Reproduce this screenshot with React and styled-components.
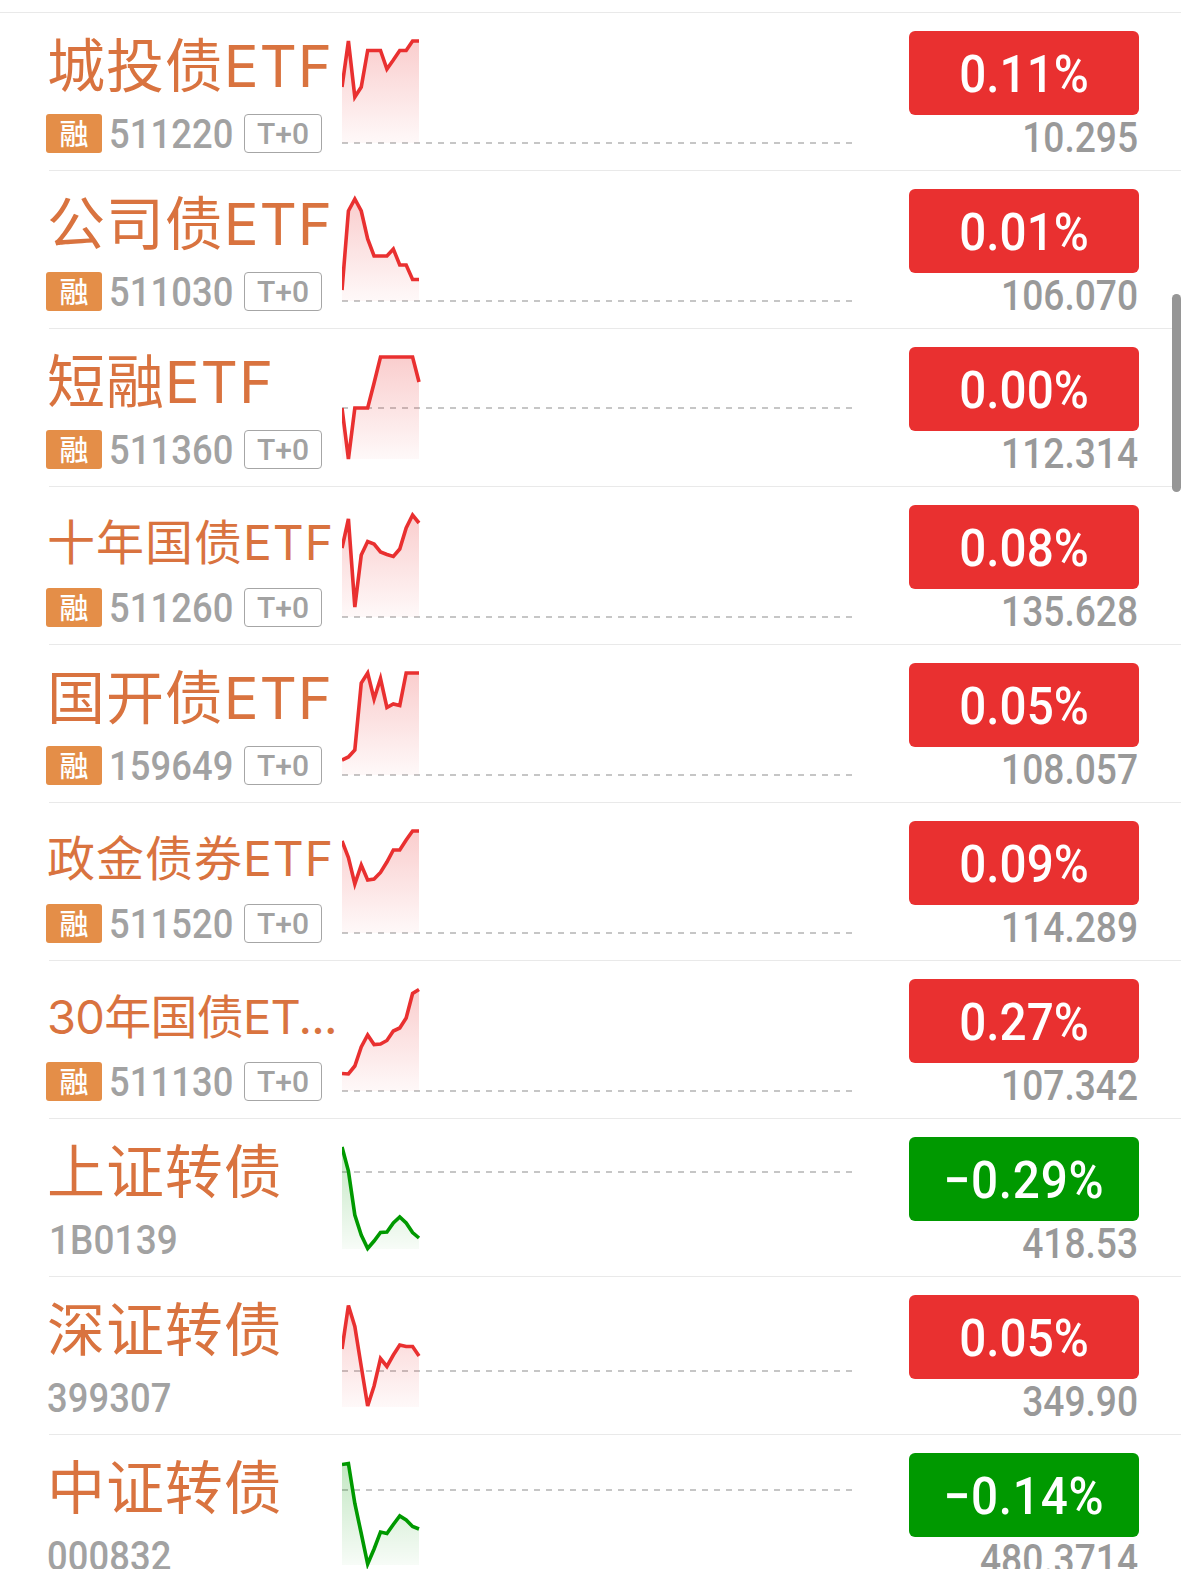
import React from "react";
import styled, { createGlobalStyle } from "styled-components";

const GlobalStyle = createGlobalStyle`
  * { box-sizing: border-box; }
  html, body { margin: 0; padding: 0; background: #fff; overflow: hidden; }
`;

const RED = "#e93030";
const GREEN = "#009900";
const DIGITS = `Roboto, "Liberation Sans", sans-serif`;
const HAN = `"Noto Sans CJK SC", sans-serif`;

const Screen = styled.main`
  position: relative;
  width: 1181px;
  height: 1569px;
  padding-top: 12px;
  overflow: hidden;
  background: #fff;
`;

const Divider = styled.div`
  height: 1px;
  margin-left: ${(p) => (p.$full ? 0 : 49)}px;
  background: #e9e9e9;
`;

const Row = styled.article`
  display: flex;
  height: 157px;
  padding: 0 42px 0 46px;
`;

const Identity = styled.div`
  width: 296px;
  flex: none;
  display: flex;
  flex-direction: column;
`;

const Name = styled.div`
  height: 101px;
  padding-left: 1px;
  padding-top: ${(p) => (p.$size < 58 ? 6 : 3)}px;
  font-family: Inter, ${HAN};
  font-size: ${(p) => p.$size}px;
  letter-spacing: ${(p) => p.$spacing}px;
  line-height: 100px;
  color: #d9733f;
  white-space: nowrap;
`;

const Meta = styled.div`
  display: flex;
  align-items: center;
  height: 39px;
`;

const MarginTag = styled.span`
  width: 56px;
  height: 39px;
  margin-right: 7px;
  flex: none;
  border-radius: 3px;
  background: #e48e48;
  color: #fff;
  font: 500 29px/37px ${HAN};
  text-align: center;
`;

const Code = styled.span`
  width: 135px;
  margin-left: ${(p) => p.$indent || 0}px;
  flex: none;
  font: 500 41.5px/39px ${DIGITS};
  letter-spacing: 0.1px;
  color: #a2a2a2;
  transform: scaleX(${(p) => p.$stretch || 0.875});
  transform-origin: left center;
`;

const Settlement = styled.span`
  display: flex;
  justify-content: center;
  width: 78px;
  height: 39px;
  flex: none;
  border: 1px solid #a6a6a6;
  border-radius: 4px;
  font: 500 30px/37px ${DIGITS};
  color: #a2a2a2;
`;

const Chart = styled.svg`
  display: block;
  width: 510px;
  height: 157px;
  flex: none;
`;

const Quote = styled.div`
  width: 230px;
  margin-left: auto;
  padding-top: 18px;
  flex: none;
`;

const Change = styled.div`
  display: flex;
  justify-content: center;
  height: 84px;
  border-radius: 6px;
  background: ${(p) => (p.$down ? GREEN : RED)};
  color: #fff;
  font: 500 51.5px/88px ${DIGITS};
`;

const ChangeText = styled.span`
  letter-spacing: ${(p) => (p.$down ? 0.8 : 0)}px;
  transform: scaleX(0.925);
`;

const Price = styled.div`
  height: 44px;
  padding-right: 1px;
  font: 500 42px/45px ${DIGITS};
  color: #999;
  text-align: right;
  transform: scaleX(0.885);
  transform-origin: right center;
`;

const ScrollThumb = styled.div`
  position: absolute;
  top: 294px;
  right: 0;
  width: 9px;
  height: 198px;
  border-radius: 5px;
  background: #969696;
`;

const funds = [
  { name: "城投债ETF", code: "511220", etf: true, change: "0.11%", price: "10.295", base: 130,
    points: [74, 28, 84, 74, 37.5, 37.5, 37.5, 56, 47, 37.5, 37.5, 28, 28] },
  { name: "公司债ETF", code: "511030", etf: true, change: "0.01%", price: "106.070", base: 130,
    points: [119, 40, 28, 40, 68, 85, 85, 85, 78, 94, 94, 108.5, 108.5] },
  { name: "短融ETF", code: "511360", etf: true, change: "0.00%", price: "112.314", base: 79,
    points: [79, 130, 79, 79, 79, 54, 28, 28, 28, 28, 28, 28, 53] },
  { name: "十年国债ETF", size: 48, spacing: 1, code: "511260", etf: true, change: "0.08%", price: "135.628", base: 130,
    points: [61, 32, 120, 68, 54.5, 57, 65, 67.5, 69.5, 62, 41, 28, 36] },
  { name: "国开债ETF", code: "159649", etf: true, change: "0.05%", price: "108.057", base: 130,
    points: [115, 112, 105, 38, 28, 54, 33.5, 62.5, 59, 60.5, 28, 28, 28] },
  { name: "政金债券ETF", size: 48, spacing: 1, code: "511520", etf: true, change: "0.09%", price: "114.289", base: 130,
    points: [38, 54.5, 81, 62, 77, 76, 69.5, 59, 47, 47, 37, 28, 28] },
  { name: "30年国债ET...", size: 47, spacing: -0.75, code: "511130", etf: true, change: "0.27%", price: "107.342", base: 130,
    points: [112.5, 113, 105, 86, 74, 83.5, 83, 79.5, 70, 67, 57, 32.5, 28.5] },
  { name: "上证转债", code: "1B0139", indent: 3, stretch: 0.89, down: true, change: "−0.29%", price: "418.53", base: 53,
    points: [28, 52, 96, 116, 129.5, 122, 113.5, 113, 104, 98, 104, 113.5, 119] },
  { name: "深证转债", code: "399307", indent: 1, change: "0.05%", price: "349.90", base: 94,
    points: [72, 28.5, 49.5, 89.5, 129, 109, 81.5, 89.5, 78, 68, 69.5, 69.5, 79] },
  { name: "中证转债", code: "000832", indent: 1, down: true, change: "−0.14%", price: "480.3714", base: 55,
    points: [29.5, 28.5, 68.5, 98.5, 129, 114, 97, 98.5, 89.5, 81, 85, 91.5, 94] },
];

function Sparkline({ id, points, base, down }) {
  const color = down ? GREEN : RED;
  const step = 77 / (points.length - 1);
  const line = points.map((y, i) => `${(i * step).toFixed(2)},${y}`).join(" ");
  return (
    <Chart viewBox="0 0 510 157" aria-hidden="true">
      <defs>
        <linearGradient id={id} gradientUnits="userSpaceOnUse" x1="0" y1="28" x2="0" y2="130">
          <stop offset="0" stopColor={color} stopOpacity="0.24" />
          <stop offset="1" stopColor={color} stopOpacity="0.03" />
        </linearGradient>
      </defs>
      <line x1="0" x2="510" y1={base} y2={base} stroke="#c6c6c6" strokeWidth="2" strokeDasharray="6 6" />
      <polygon points={`0,130 ${line} 77,130`} fill={`url(#${id})`} />
      <polyline points={line} fill="none" stroke={color} strokeWidth="3.6" />
    </Chart>
  );
}

function FundRow({ fund, index }) {
  return (
    <Row>
      <Identity>
        <Name $size={fund.size || 58} $spacing={fund.spacing ?? 0.9}>{fund.name}</Name>
        <Meta>
          {fund.etf && <MarginTag>融</MarginTag>}
          <Code $indent={fund.indent} $stretch={fund.stretch}>{fund.code}</Code>
          {fund.etf && <Settlement>T+0</Settlement>}
        </Meta>
      </Identity>
      <Sparkline id={`area-${index}`} points={fund.points} base={fund.base} down={fund.down} />
      <Quote>
        <Change $down={fund.down}>
          <ChangeText $down={fund.down}>{fund.change}</ChangeText>
        </Change>
        <Price>{fund.price}</Price>
      </Quote>
    </Row>
  );
}

export default function App() {
  return (
    <>
      <GlobalStyle />
      <Screen>
        {funds.map((fund, i) => (
          <React.Fragment key={fund.code}>
            <Divider $full={i === 0} />
            <FundRow fund={fund} index={i} />
          </React.Fragment>
        ))}
        <ScrollThumb />
      </Screen>
    </>
  );
}
